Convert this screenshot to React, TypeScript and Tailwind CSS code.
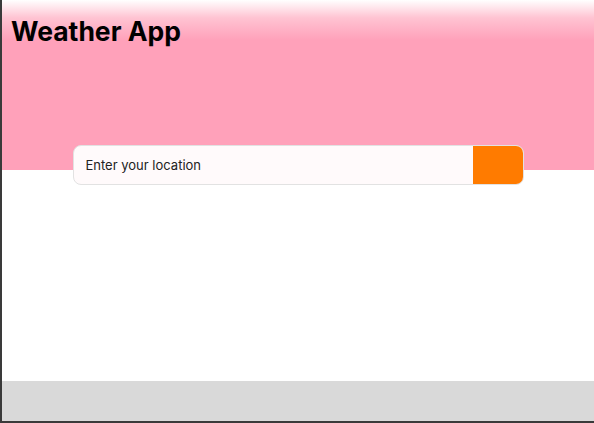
export default function App() {
  return (
    <div className="flex h-[423px] w-full flex-col border-b-2 border-l-2 border-[#3a3a3a] bg-white font-['Inter','Liberation_Sans',sans-serif]">
      <header className="h-[170px] shrink-0 bg-[linear-gradient(to_bottom,#ffffff_0px,#ffc3d2_18px,#ffa1ba_40px,#ffa1ba_100%)] pl-[9px] pt-[14px]">
        <h1 className="text-[26.5px] font-bold leading-[34px] text-black">Weather App</h1>
      </header>

      <div className="relative -mt-[25px] flex justify-center">
        <div className="flex h-[40px] w-[451px] overflow-hidden rounded-lg border border-[#e2e2e2] bg-[#fffafb]">
          <input
            type="text"
            placeholder="Enter your location"
            className="h-full flex-1 bg-transparent px-3 text-[13px] text-[#222] outline-none placeholder:text-[#222]"
          />
          <button className="h-full w-[50px] bg-[#ff7b00]" aria-label="Search" />
        </div>
      </div>

      <main className="flex-1" />

      <footer className="h-[40px] shrink-0 bg-[#d9d9d9]" />
    </div>
  );
}
